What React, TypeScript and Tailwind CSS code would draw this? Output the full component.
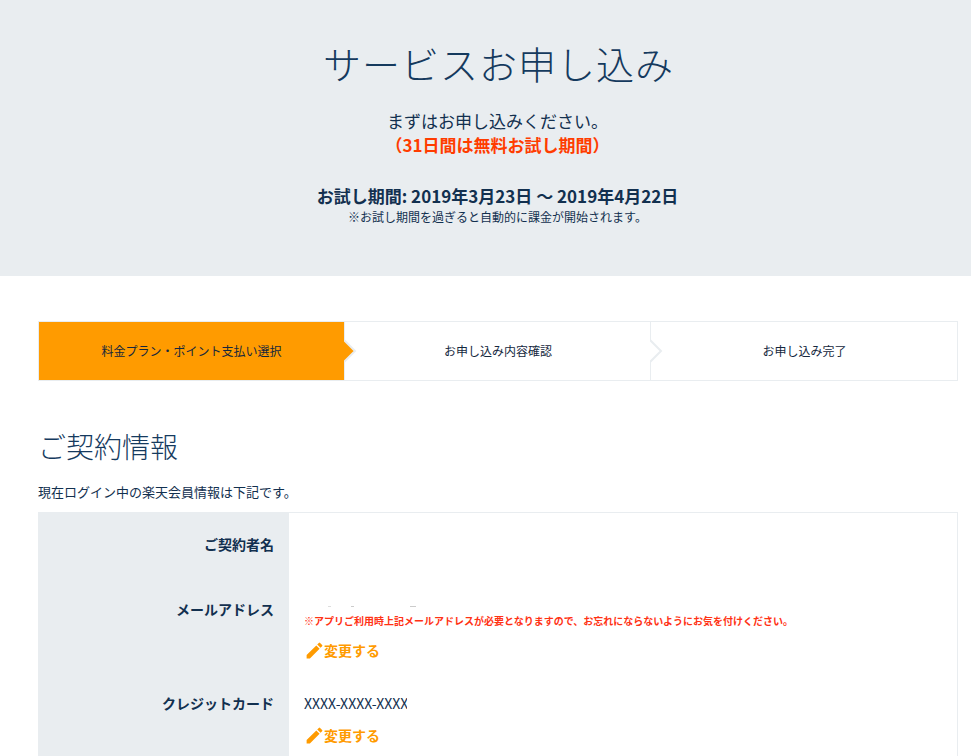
const font = { fontFamily: '"Noto Sans CJK JP", "Noto Sans", sans-serif' };

function Pencil() {
  return (
    <svg viewBox="0 0 24 24" className="w-[21px] h-[21px] -mr-[1px] shrink-0 fill-[#ff9b00]">
      <path d="M3 17.25V21h3.75L17.81 9.94l-3.75-3.75L3 17.25zM20.71 7.04a1 1 0 0 0 0-1.41l-2.34-2.34a1 1 0 0 0-1.41 0l-1.83 1.83 3.75 3.75 1.83-1.83z" />
    </svg>
  );
}

function ChangeLink() {
  return (
    <a className="flex items-center h-[20px] text-[14px] leading-[20px] font-bold text-[#ff9b00]">
      <Pencil />
      <span>変更する</span>
    </a>
  );
}

function Step({ label, active, last, width }: { label: string; active?: boolean; last?: boolean; width: string }) {
  return (
    <div
      className={`relative ${width} flex items-center justify-center text-[12px] text-[#14273d] ${
        active ? "bg-[#ff9b00]" : "pl-[1px]"
      } ${last ? "" : "border-r border-[#e9edf0]"}`}
    >
      <span>{label}</span>
      {!last && (
        <svg viewBox="0 0 13 26" className="absolute left-full top-1/2 -translate-y-1/2 w-[13px] h-[26px] z-10">
          <path d="M-1 1 L11 13 L-1 25 Z" fill={active ? "#ff9b00" : "#fff"} stroke="#e9edf0" strokeWidth="2" />
        </svg>
      )}
    </div>
  );
}

export default function App() {
  return (
    <div style={font} className="w-[971px] h-[756px] overflow-hidden bg-white text-[#12304f]">
      <header className="h-[276px] bg-[#e9edf0] flex flex-col items-center pt-[35px] pl-[24px] text-center">
        <h1 className="ml-[2px] text-[38px] leading-[56px] font-light tracking-[1px] text-[#153a5e]">サービスお申し込み</h1>
        <p className="mt-[17px] text-[17px] leading-[25px]">まずはお申し込みください。</p>
        <p className="mt-[-1px] text-[17px] leading-[25px] font-bold text-[#ff3c00]">（31日間は無料お試し期間）</p>
        <p className="mt-[26px] text-[17px] leading-[25px] font-bold">お試し期間: 2019年3月23日 〜 2019年4月22日</p>
        <p className="mt-[1px] text-[12px] leading-[16px]">※お試し期間を過ぎると自動的に課金が開始されます。</p>
      </header>

      <main className="pl-[38px] pr-[13px]">
        <div className="mt-[45px] h-[60px] flex border border-[#e9edf0]">
          <Step label="料金プラン・ポイント支払い選択" active width="w-[306px]" />
          <Step label="お申し込み内容確認" width="w-[306px]" />
          <Step label="お申し込み完了" last width="flex-1" />
        </div>

        <h2 className="mt-[44px] text-[28px] leading-[42px] font-light text-[#153a5e]">ご契約情報</h2>
        <p className="mt-[15px] text-[13px] leading-[20px]">現在ログイン中の楽天会員情報は下記です。</p>

        <div className="mt-[10px] border-t border-r border-[#e9edf0] flex h-[300px]">
          <div className="w-[251px] bg-[#e9edf0] text-right font-bold text-[14px] pr-[15px] shrink-0">
            <div className="h-[64px] pt-[21px] leading-[20px]">ご契約者名</div>
            <div className="h-[116px] pt-[22px] leading-[20px]">メールアドレス</div>
            <div className="leading-[20px]">クレジットカード</div>
          </div>
          <div className="pl-[15px] flex-1">
            <div className="h-[95px] flex items-end pb-[1px]">
              <div className="flex gap-[20px] pl-[24px]">
                <span className="w-[3px] h-[1px] bg-[#dddddd]"></span>
                <span className="w-[3px] h-[1px] bg-[#cccccc]"></span>
                <span className="w-[6px] h-[1px] bg-[#cccccc] ml-[36px]"></span>
              </div>
            </div>
            <p className="mt-[5px] text-[10px] leading-[16px] font-bold text-[#ff3214]">
              ※アプリご利用時上記メールアドレスが必要となりますので、お忘れにならないようにお気を付けください。
            </p>
            <div className="mt-[11px]"><ChangeLink /></div>
            <p className="mt-[33px] text-[14px] leading-[20px] w-[103px] overflow-hidden whitespace-nowrap">XXXX-XXXX-XXXX</p>
            <div className="mt-[12px]"><ChangeLink /></div>
          </div>
        </div>
      </main>
    </div>
  );
}
